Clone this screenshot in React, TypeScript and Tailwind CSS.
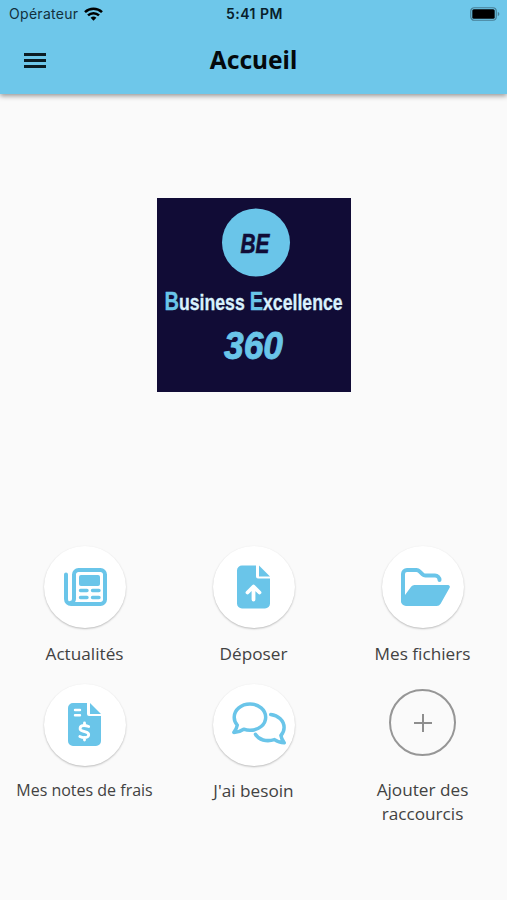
import React from 'react';

interface Shortcut {
  id: string;
  label: string;
  icon: React.ReactNode;
  labelClass?: string;
}

const NewsIcon = () => (
  <svg className="w-[43px] h-[38px] ml-px" viewBox="0 0 43 38" fill="none">
    <path
      d="M2 6.500V31a5 5 0 0 0 5 5h29.500a4.500 4.500 0 0 0 4.500-4.500v-25A4.500 4.500 0 0 0 36.500 2h-22A4.500 4.500 0 0 0 10 6.500V31a4 4 0 0 1-4 4"
      stroke="#6ac5e9"
      strokeWidth="4"
      strokeLinecap="round"
    />
    <rect x="15" y="7" width="21" height="11" rx="2" fill="#6ac5e9" />
    <path d="M16.500 22.500h6.500M28.500 22.500h6.500M16.500 29.500h6.500M28.500 29.500h6.500" stroke="#6ac5e9" strokeWidth="3.400" strokeLinecap="round" />
  </svg>
);

const UploadIcon = () => (
  <svg className="w-[33px] h-[44px]" viewBox="0 0 33 44" fill="none">
    <path d="M5 0.500h14v11a2 2 0 0 0 2 2h12v25a5 5 0 0 1-5 5H5a5 5 0 0 1-5-5v-33a5 5 0 0 1 5-5Z" fill="#6ac5e9" />
    <path d="M22 0.500l11 11H22Z" fill="#6ac5e9" />
    <path d="M16.500 34.500V23M10.500 27.500l6-6 6 6" stroke="white" strokeWidth="3.800" strokeLinecap="round" strokeLinejoin="round" />
  </svg>
);

const FolderIcon = () => (
  <svg className="w-[49px] h-[38px] ml-[6px]" viewBox="0 0 49 38" fill="none">
    <path d="M2 33V6a4 4 0 0 1 4-4h9.500a4 4 0 0 1 2.800 1.200l3.300 3.200A4 4 0 0 0 24.400 7.600H34a4.500 4.500 0 0 1 4.500 4.500" stroke="#6ac5e9" strokeWidth="4" strokeLinecap="round" />
    <path d="M13.500 17H47a1.800 1.800 0 0 1 1.600 2.700l-9 16A4.500 4.500 0 0 1 35.700 38H5a5 5 0 0 1-5-5l4-6 6.300-8.500A4 4 0 0 1 13.500 17Z" fill="#6ac5e9" />
  </svg>
);

const ExpenseIcon = () => (
  <svg className="w-[33px] h-[44px]" viewBox="0 0 33 44" fill="none">
    <path d="M5 0h14v11a2 2 0 0 0 2 2h12v25a5 5 0 0 1-5 5H5a5 5 0 0 1-5-5V5a5 5 0 0 1 5-5Z" fill="#6ac5e9" />
    <path d="M22 0l11 11H22Z" fill="#6ac5e9" />
    <path d="M7 7h5M7 12.200h5" stroke="white" strokeWidth="2.400" strokeLinecap="round" />
    <path
      d="M16.500 20v2.500M16.500 34.500V37M20.700 23.500c-2-.7-3.400-1-4.700-1-4.700 0-5.300 4.600-1 5.700l2.500.7c4.800 1.300 4 5.700-1.200 5.700-1.600 0-3.200-.5-4.500-1.100"
      stroke="white"
      strokeWidth="2.800"
      strokeLinecap="round"
    />
  </svg>
);

const ChatIcon = () => (
  <svg className="w-[54px] h-[44px] ml-[11px] -mt-[2px] shrink-0" viewBox="0 0 54 44" fill="none" stroke="#6ac5e9" strokeWidth="3.500" strokeLinecap="round" strokeLinejoin="round">
    <path d="M18 2C9.200 2 2.200 7.800 2.200 15.200c0 3 1.100 5.700 3.100 7.900-.4 2.700-1.700 5.100-3.400 7.300 3.800-.2 7.100-1.300 9.800-3.200 2 .7 4.100 1.100 6.300 1.100 8.800 0 15.700-5.800 15.700-13.100S26.800 2 18 2Z" />
    <path d="M38.700 12.500c7.600.8 13.400 6.400 13.400 13 0 3-1.200 5.800-3.200 8 .4 2.600 1.600 5 3.300 7.300-3.700-.1-7-1.300-9.700-3.200-8.300 2.500-15.800.2-19-5.300" />
  </svg>
);

const shortcuts: Shortcut[] = [
  { id: 'news', label: 'Actualités', icon: <NewsIcon /> },
  { id: 'upload', label: 'Déposer', icon: <UploadIcon /> },
  { id: 'files', label: 'Mes fichiers', icon: <FolderIcon /> },
  { id: 'expenses', label: 'Mes notes de frais', icon: <ExpenseIcon />, labelClass: 'text-[16px] mt-[12px]' },
  { id: 'help', label: "J'ai besoin", icon: <ChatIcon />, labelClass: 'text-[17.200px] mt-[13px]' },
];

const StatusBar = () => (
  <div className="grid grid-cols-3 items-center h-[27px] pl-[9px] pr-[7px] font-[Inter,sans-serif] text-[14px]">
    <div className="flex items-center gap-[6px]">
      <span className="text-[#12303c] tracking-[0.300px]">Opérateur</span>
      <svg className="w-[19px] h-[14px]" viewBox="0 0 19 14" fill="none" stroke="black" strokeWidth="2.500">
        <path d="M1 5.200a12.300 12.300 0 0 1 17 0M4 8.400a8 8 0 0 1 11 0" />
        <path d="M9.500 13.700 6.600 10.800a4.200 4.200 0 0 1 5.800 0Z" fill="black" stroke="none" />
      </svg>
    </div>
    <span className="text-center font-semibold tracking-[0.500px] whitespace-nowrap text-[#08202b]">5:41 PM</span>
    <svg className="w-[30px] h-[14px] justify-self-end" viewBox="0 0 30 14" fill="none">
      <rect x="0.750" y="0.750" width="25.500" height="12.500" rx="3.500" stroke="#477f96" strokeWidth="1.200" />
      <rect x="2.300" y="2.300" width="22.400" height="9.400" rx="1.500" fill="black" />
      <path d="M27.800 5v4c1-.3 1.500-1.100 1.500-2s-.5-1.700-1.500-2Z" fill="#477f96" />
    </svg>
  </div>
);

const Logo = () => (
  <svg className="w-[194px] h-[194px] bg-[#110c36]" viewBox="0 0 194 194" fontFamily="'Liberation Sans', Arial, sans-serif" fontWeight="bold">
    <circle cx="99" cy="44.500" r="34" fill="#6ac5e9" />
    <text transform="translate(83.500 54.500) scale(0.745 1)" fontSize="28" fontStyle="italic" fill="#110c36" stroke="#110c36" strokeWidth="0.600">BE</text>
    <text transform="translate(7.500 111.500) scale(0.803 1)" fontSize="22" fill="#d9f1fd" stroke="#d9f1fd" strokeWidth="0.300">
      <tspan fontSize="25" fill="#6ac5e9" stroke="#6ac5e9">B</tspan>usiness <tspan fontSize="25" fill="#6ac5e9" stroke="#6ac5e9">E</tspan>xcellence
    </text>
    <text transform="translate(67 161) scale(0.93 1)" fontSize="38" fontStyle="italic" fill="#6ac5e9" stroke="#6ac5e9" strokeWidth="0.900">360</text>
  </svg>
);

const App: React.FC = () => {
  return (
    <div className="flex flex-col h-[900px] bg-[#fafafa] font-['Open_Sans','Noto_Sans',sans-serif]">
      <header className="h-[94px] shrink-0 bg-[#6ec7ea] shadow-[0_2px_5px_rgba(0,0,0,0.4)]">
        <StatusBar />
        <div className="grid grid-cols-3 items-center h-[66px] px-6">
          <button className="flex flex-col gap-[3px] w-[22px]" aria-label="Menu">
            <span className="h-[3px] bg-[#0b1c24]" />
            <span className="h-[3px] bg-[#0b1c24]" />
            <span className="h-[3px] bg-[#0b1c24]" />
          </button>
          <h1 className="text-center font-['Noto_Sans',sans-serif] text-[24.500px] font-bold text-[#04090c]">Accueil</h1>
        </div>
      </header>

      <div className="flex justify-center pt-[104px] pl-px">
        <Logo />
      </div>

      <main className="grid grid-cols-3 mt-[154px]">
        {shortcuts.map((shortcut) => (
          <div key={shortcut.id} className="flex flex-col items-center h-[138px]">
            <button className="flex items-center justify-center w-[82px] h-[82px] shrink-0 rounded-full bg-white shadow-[0_1px_2px_rgba(0,0,0,0.25)]">
              {shortcut.icon}
            </button>
            <span className={`leading-6 text-[#424242] whitespace-nowrap ${shortcut.labelClass ?? 'text-[17.200px] mt-[14px]'}`}>
              {shortcut.label}
            </span>
          </div>
        ))}
        <div className="flex flex-col items-center h-[138px] pt-[5px]">
          <button className="flex items-center justify-center w-[67px] h-[67px] shrink-0 rounded-full border-2 border-[#969696]">
            <svg className="w-[18px] h-[18px]" viewBox="0 0 18 18" stroke="#8e8e8e" strokeWidth="2">
              <path d="M9 0v18M0 9h18" />
            </svg>
          </button>
          <span className="mt-[22px] w-[110px] text-[17.200px] leading-[23.500px] text-center text-[#424242]">Ajouter des raccourcis</span>
        </div>
      </main>
    </div>
  );
};

export default App;
